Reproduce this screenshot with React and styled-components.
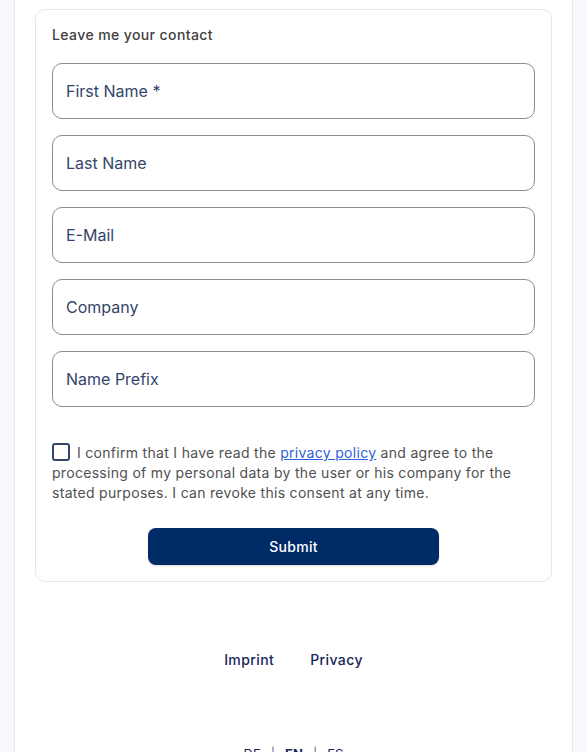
import React, { useState } from "react";
import styled, { createGlobalStyle } from "styled-components";

const fields = ["First Name *", "Last Name", "E-Mail", "Company", "Name Prefix"];

function App() {
  const [checked, setChecked] = useState(false);

  return (
    <>
      <GlobalStyle />
      <Page>
        <Column>
          <Card>
            <Title>Leave me your contact</Title>
            <Fields>
              {fields.map((f) => (
                <Input key={f} placeholder={f} />
              ))}
            </Fields>
            <Consent>
              <Check
                type="checkbox"
                checked={checked}
                onChange={() => setChecked(!checked)}
              />
              I confirm that I have read the <a href="#privacy">privacy policy</a>{" "}
              and agree to the processing of my personal data by the user or his
              company for the stated purposes. I can revoke this consent at any
              time.
            </Consent>
            <Submit>Submit</Submit>
          </Card>
          <FooterLinks>
            <a href="#imprint">Imprint</a>
            <a href="#privacy">Privacy</a>
          </FooterLinks>
          <Languages>
            <span>DE</span>
            <Sep>|</Sep>
            <Active>EN</Active>
            <Sep>|</Sep>
            <span>ES</span>
          </Languages>
        </Column>
      </Page>
    </>
  );
}

const GlobalStyle = createGlobalStyle`
  body {
    margin: 0;
    background: #f8f9fe;
    font-family: Inter, "Open Sans", sans-serif;
  }
`;

const Page = styled.div`
  padding: 0 14px;
`;

const Column = styled.div`
  background: #fff;
  border-left: 1px solid #e6e8f4;
  border-right: 1px solid #e6e8f4;
  padding: 9px 20px 0;
  min-height: 800px;
`;

const Card = styled.div`
  border: 1px solid #e4e6ee;
  border-radius: 10px;
  padding: 15px 16px 16px;
  display: flex;
  flex-direction: column;
`;

const Title = styled.div`
  font-size: 14px;
  line-height: 20px;
  font-weight: 500;
  letter-spacing: 0.4px;
  color: #404040;
  margin-bottom: 18px;
`;

const Fields = styled.div`
  display: flex;
  flex-direction: column;
  gap: 16px;
`;

const Input = styled.input`
  box-sizing: border-box;
  height: 56px;
  width: 100%;
  border: 1px solid #8c8c8c;
  border-radius: 10px;
  padding: 0 13px;
  font-family: inherit;
  font-size: 16px;
  outline: none;
  &::placeholder {
    color: #34456a;
  }
`;

const Consent = styled.p`
  margin: 36px 0 0;
  font-size: 14px;
  line-height: 20px;
  letter-spacing: 0.3px;
  color: #505050;
  a {
    color: #2f5fd6;
    text-decoration: underline;
  }
`;

const Check = styled.input`
  appearance: none;
  box-sizing: border-box;
  width: 18px;
  height: 18px;
  margin: 0 7px 0 0;
  border: 2px solid #34456a;
  border-radius: 3px;
  vertical-align: -3px;
  &:checked {
    background: #34456a;
  }
`;

const Submit = styled.button`
  align-self: center;
  margin-top: 25px;
  width: 291px;
  height: 37px;
  border: none;
  border-radius: 8px;
  background: #002b66;
  color: #fff;
  font-family: inherit;
  font-size: 14px;
  font-weight: 500;
  letter-spacing: 0.3px;
  box-shadow: 0 1px 2px rgba(0, 0, 0, 0.15);
`;

const FooterLinks = styled.div`
  display: flex;
  justify-content: center;
  gap: 36px;
  margin-top: 68px;
  font-size: 14px;
  line-height: 20px;
  font-weight: 500;
  letter-spacing: 0.4px;
  a {
    color: #14265a;
    text-decoration: none;
  }
`;

const Languages = styled.div`
  display: flex;
  justify-content: center;
  gap: 10px;
  margin-top: 76px;
  font-size: 13px;
  color: #14265a;
`;

const Sep = styled.span`
  color: #6a7390;
`;

const Active = styled.span`
  font-weight: 700;
`;

export default App;
